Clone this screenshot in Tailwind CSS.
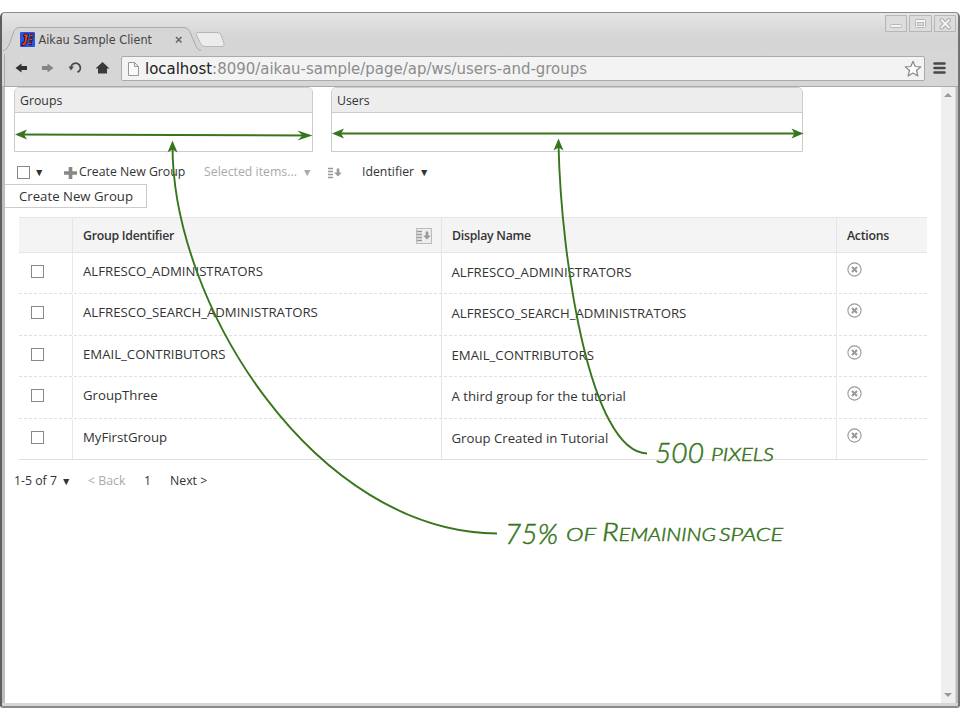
<!DOCTYPE html>
<html lang="en"><head><meta charset="utf-8"><title>Aikau Sample Client</title>
<script src="https://cdn.jsdelivr.net/npm/@tailwindcss/browser@4"></script></head>
<body class="bg-white w-[960px] h-[720px] overflow-hidden pt-[12px] font-['Open_Sans',sans-serif] text-[13.2px] text-[#333]">
<svg width="0" height="0" class="absolute"><defs>
<symbol id="sort" viewBox="0 0 14 12"><path d="M0 1.5H5M0 4.5H5M0 7.5H5M0 10.5H5" stroke="#999" stroke-width="1.7"/><path d="M8.7 1.5h2.6v4h2.5L10 9.500 6.200 5.500h2.500z" fill="#999"/></symbol>
<symbol id="del" viewBox="0 0 15 15"><circle cx="7.500" cy="7.500" r="6.600" fill="#fff" stroke="#999" stroke-width="1.100"/><path d="M5 5l5 5M10 5l-5 5" stroke="#999" stroke-width="2.100"/></symbol>
</defs></svg>
<div class="h-[696px] flex flex-col rounded-t-[5px] rounded-b-[3px] border-t border-[#8b8b8b] border-l-2 border-l-[#625d5d] border-r-2 border-r-[#737373] border-b-2 border-b-[#8a8a8a] bg-[#d6d6d6] overflow-hidden">
  <header class="h-[38px] shrink-0 flex items-start bg-linear-to-b from-[#e6e6e6] to-[#d5d5d5] to-60% relative">
    <svg class="shrink-0" width="230" height="38" viewBox="2 13 230 38"><path d="M3 51q4-1 6-6l5-14q1.500-3.500 5-3.500H184q4 0 5.500 3.500l6.500 15q2 4.500 5 4.500" fill="#d6d6d6" stroke="#aaa"/><path d="M198 32.500h19q3 0 4 2.500l3 8.500q1 3-2 3h-17q-3 0-4.500-3l-4-8.500q-1-2.500 1.500-2.500z" fill="#ececec" stroke="#b7b7b7"/>
      <rect x="20" y="32" width="15" height="15" rx="1" fill="#2854e0"/><path d="M24 34h4.500l-2 9-2 2.500h-3l1-3h1.500l1-6h-1.500z" fill="#ff3b12" stroke="#17172c" stroke-width=".9"/><path d="M30 35.500h3.500M29.500 39.500h3M29 43.500h3" stroke="#17172c" stroke-width="3.400"/><path d="M30 35.500h3M29.500 39.500h2.500M29 43.500h2.500" stroke="#ff3b12" stroke-width="1.600"/>
      <path d="M176 37l5.500 5.500M181.500 37L176 42.500" stroke="#666" stroke-width="1.600"/>
      <text x="38.500" y="43.500" font-family="DejaVu Sans" font-size="11.500" textLength="113.500" lengthAdjust="spacingAndGlyphs" fill="#444">Aikau Sample Client</text></svg>
    <svg class="ml-auto shrink-0" width="75" height="20" viewBox="883 13 75 20" fill="#dcdcdc" stroke="#b6b6b6"><path d="M885.500 15.500h21v16h-21zM909.500 15.500h22v16h-22zM934.500 15.500h21v16h-21z"/><rect x="890.500" y="24.500" width="11" height="3" rx="1" fill="#f5f5f5"/><rect x="915.500" y="19.500" width="10" height="8" rx="1" fill="#f5f5f5"/><rect x="917.500" y="22.500" width="6" height="3"/><path d="M941.500 20l7.500 7.500M949 20l-7.500 7.500" stroke="#aaa" stroke-width="4" stroke-linecap="round"/><path d="M941.500 20l7.500 7.500M949 20l-7.500 7.500" stroke="#f5f5f5" stroke-width="2" stroke-linecap="round"/></svg>
  </header>
  <nav class="h-[36px] shrink-0 flex items-start border-b border-[#aaa]">
    <svg class="shrink-0" width="119" height="35" viewBox="2 51 119 35"><path d="M4.500 86V54" stroke="#aaa" fill="none"/><path d="M15.500 68l6-4.500v2.500h5.500v4h-5.500v2.500z" fill="#333"/><path d="M53.500 68l-6-4.500v2.500h-5.500v4h5.500v2.500z" fill="#858585"/><path d="M71 68.500a4.700 4.700 0 1 1 6.500 3.700" fill="none" stroke="#4b4b4b" stroke-width="1.800"/><path d="M68.500 66.500h5.500l-3 4z" fill="#4b4b4b"/><path d="M102.500 62l7 6.500h-2.500v5h-9v-5h-2.500z" fill="#3a3a3a"/></svg>
    <div class="mt-[5px] h-[25px] w-[804px] rounded-[2px] border border-[#aaa] bg-[#f3f3f3] flex items-center">
      <svg class="ml-[5px] shrink-0" width="13" height="16" viewBox="0 0 13 16"><path d="M1.500 1.500h6l4 4v9h-10zM7.500 1.500v4h4" fill="#fafafa" stroke="#999"/></svg>
      <svg class="shrink-0" width="764" height="23" viewBox="140 57 764 23"><text x="145" y="74" font-family="DejaVu Sans" font-size="15" textLength="442" lengthAdjust="spacingAndGlyphs" fill="#8c8c8c"><tspan fill="#222">localhost</tspan>:8090/aikau-sample/page/ap/ws/users-and-groups</text></svg>
      <svg class="shrink-0" width="18" height="18" viewBox="0 0 18 18"><path d="M9 1.300l2.200 5.200 5.600.4-4.300 3.600 1.400 5.500L9 13l-4.900 3 1.400-5.500-4.300-3.600 5.600-.4z" fill="#fff" stroke="#888" stroke-linejoin="round" stroke-width="1.200"/></svg>
    </div>
    <svg class="ml-[8px] mt-[10px]" width="13" height="14"><path d="M1.500 2.500H11.500M1.500 7H11.500M1.500 11.500H11.500" stroke="#484848" stroke-width="2.600" stroke-linecap="round"/></svg>
  </nav>
  <div class="h-[616px] shrink-0 flex border-l-[3px] border-[#bdbdbd] border-r-[2px]">
    <main class="w-[936px] bg-white">
      <div class="flex gap-[18px] pl-[9px]">
        <section class="w-[299px] h-[65px] border border-[#ccc] rounded-t-[5px] overflow-hidden"><h2 class="h-[25px] border-b border-[#ccc] bg-[#ededed] pl-[5px] leading-[26px] text-[12.300px]">Groups</h2></section>
        <section class="w-[472px] h-[65px] border border-[#ccc] rounded-t-[5px] overflow-hidden"><h2 class="h-[25px] border-b border-[#ccc] bg-[#ededed] pl-[5px] leading-[26px] text-[12.300px]">Users</h2></section>
      </div>
      <div class="h-[32px] pt-[9px] flex items-center text-[12.300px] whitespace-nowrap pl-[12px]">
        <i class="block size-[13px] border border-[#888]"></i>
        <span class="w-[17px] pl-[4px] text-[10.500px]">▼</span>
        <svg class="ml-[16px] shrink-0" width="14" height="14"><path d="M7.500 1v12M1 7h13" stroke="#888" stroke-width="3.700"/></svg>
        <span class="w-[127px] pl-[2px]">Create New Group</span>
        <span class="w-[98px] text-[#aaa]">Selected items...</span><span class="w-[26px] text-[10.500px] text-[#aaa]">▼</span>
        <svg class="shrink-0" width="14" height="12"><use href="#sort"/></svg>
        <span class="w-[57px] ml-[20px]">Identifier</span><span class="text-[10.500px]">▼</span>
      </div>
      <div class="w-[142px] h-[24px] border border-l-0 border-[#ccc] pl-[14px] leading-[23px] text-[13.200px]">Create New Group</div>
      <div class="mt-[9px] ml-[14px] w-[908px]">
        <div class="h-[36px] grid grid-cols-[54px_369px_395px_90px] bg-[#f4f4f4] border-y border-[#e5e5e5] text-[12.300px] font-semibold tracking-[-0.26px] leading-[35px]">
          <div class="border-r border-[#e5e5e5]"></div><div class="border-r border-[#e5e5e5] pl-[10px] pr-[9px] flex items-center justify-between">Group Identifier<span class="size-[16px] border border-[#bbb] bg-[#eee] flex items-center justify-center"><svg width="14" height="12"><use href="#sort"/></svg></span></div><div class="border-r border-[#e5e5e5] pl-[10px]">Display Name</div><div class="pl-[10px]">Actions</div>
        </div>
        <div id="rows"></div>
      </div>
      <div class="flex pl-[9px] pt-[11px] leading-[20px] text-[12.300px] whitespace-nowrap"><span class="w-[47px]">1-5 of 7</span><span class="w-[27px] text-[10.500px]">▼</span><span class="w-[56px] text-[#aaa]">&lt; Back</span><span class="w-[26px]">1</span><span>Next &gt;</span></div>
    </main>
    <aside class="w-[14px] bg-[#efefef] flex flex-col justify-between items-center py-[5px]"><svg width="8" height="5"><path d="M0 5l4-4 4 4z" fill="#999"/></svg><svg width="8" height="5"><path d="M0 0h8L4 4z" fill="#999"/></svg></aside>
  </div>
</div>
<svg class="absolute left-0 top-0" width="960" height="720" fill="none" stroke="#38761d" stroke-width="1.900">
<path d="M18 134.500L308 135.500M335 133.500H800M172.500 145C172 305 315 532 497 533.500M558.500 144C561 260 590 452 647 453.500"/>
<g fill="#38761d" stroke="none"><path d="M15 134.500l12-5-3 5 3 5z"/><path d="M312.500 135.500l-15-5 5 5-5 5z"/><path d="M332 133.500l12-5-3 5 3 5z"/><path d="M803.500 133.500l-12-5 3 5-3 5z"/><path d="M172.500 140.500l-5 12 5-3 5 3z"/><path d="M558.500 138.500l-5 12 5-3 5 3z"/></g>
<g fill="#38761d" stroke="#38761d" stroke-width=".5" font-family="Lato" font-style="italic" font-weight="300" font-variant="small-caps">
<text x="655" y="463" font-size="28" textLength="49" lengthAdjust="spacingAndGlyphs">500</text><text x="711" y="461" font-size="26" textLength="63" lengthAdjust="spacingAndGlyphs">pixels</text>
<text x="505" y="544" font-size="28" textLength="53" lengthAdjust="spacingAndGlyphs">75%</text><text x="566" y="541" font-size="25" textLength="30" lengthAdjust="spacingAndGlyphs">of</text><text x="602" y="541" font-size="25" textLength="114" lengthAdjust="spacingAndGlyphs">Remaining</text><text x="719" y="541" font-size="25" textLength="64" lengthAdjust="spacingAndGlyphs">space</text></g>
</svg>
<script>
const data=[["ALFRESCO_ADMINISTRATORS","ALFRESCO_ADMINISTRATORS"],["ALFRESCO_SEARCH_ADMINISTRATORS","ALFRESCO_SEARCH_ADMINISTRATORS"],["EMAIL_CONTRIBUTORS","EMAIL_CONTRIBUTORS"],["GroupThree","A third group for the tutorial"],["MyFirstGroup","Group Created in Tutorial"]];
document.getElementById("rows").innerHTML=data.map(([a,b],i)=>`<div class="h-[41.4px] grid grid-cols-[54px_369px_395px_90px] border-b ${i<4?'border-dashed':''} border-[#dfdfdf] leading-[37px]"><div class="border-r border-solid border-[#e9e9e9] pl-[12px] pt-[12px]"><i class="block size-[13px] border border-[#888]"></i></div><div class="border-r border-solid border-[#e5e5e5] pl-[10px]">${a}</div><div class="border-r border-solid border-[#e9e9e9] pl-[9.5px] pt-[1px]">${b}</div><div class="pl-[10px] pt-[9px]"><svg width="15" height="15"><use href="#del"/></svg></div></div>`).join("");
</script>
</body></html>
